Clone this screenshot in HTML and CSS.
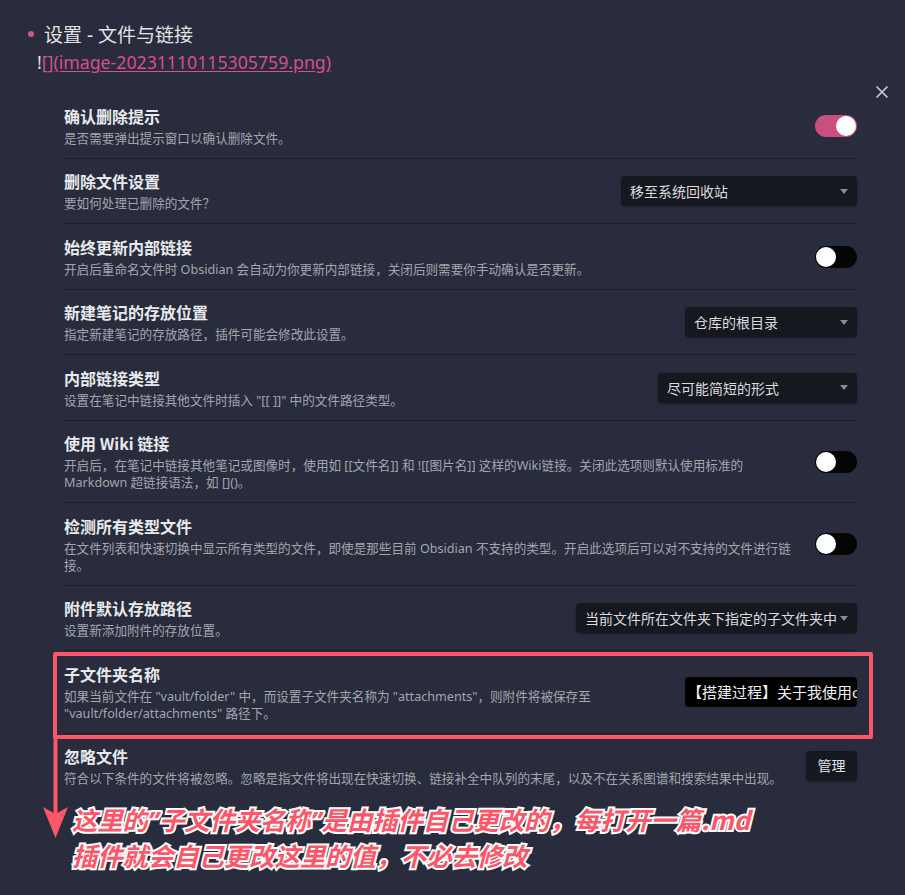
FILE: index.html
```html
<!DOCTYPE html>
<html lang="zh-CN">
<head>
<meta charset="utf-8">
<title>设置 - 文件与链接</title>
<link rel="stylesheet" href="styles.css">
</head>
<body>
<div class="page">
  <div class="note">
    <div class="heading"><span class="bullet"></span><span>设置 - 文件与链接</span></div>
    <div class="embed">!<a href="#">[](image-20231110115305759.png)</a></div>
  </div>

  <div class="modal">
    <svg class="close" viewBox="0 0 12 12" width="12" height="12"><path d="M1 1L11 11M11 1L1 11" stroke="#c9cad0" stroke-width="1.7" stroke-linecap="round"/></svg>

    <div class="settings">
      <div class="item">
        <div class="info">
          <div class="name">确认删除提示</div>
          <div class="desc">是否需要弹出提示窗口以确认删除文件。</div>
        </div>
        <div class="control"><div class="toggle on"><span class="knob"></span></div></div>
      </div>

      <div class="item">
        <div class="info">
          <div class="name">删除文件设置</div>
          <div class="desc">要如何处理已删除的文件？</div>
        </div>
        <div class="control"><div class="select w-236"><span class="select-text">移至系统回收站</span><span class="caret"></span></div></div>
      </div>

      <div class="item">
        <div class="info">
          <div class="name">始终更新内部链接</div>
          <div class="desc">开启后重命名文件时 Obsidian 会自动为你更新内部链接，关闭后则需要你手动确认是否更新。</div>
        </div>
        <div class="control"><div class="toggle"><span class="knob"></span></div></div>
      </div>

      <div class="item">
        <div class="info">
          <div class="name">新建笔记的存放位置</div>
          <div class="desc">指定新建笔记的存放路径，插件可能会修改此设置。</div>
        </div>
        <div class="control"><div class="select w-172"><span class="select-text">仓库的根目录</span><span class="caret"></span></div></div>
      </div>

      <div class="item">
        <div class="info">
          <div class="name">内部链接类型</div>
          <div class="desc">设置在笔记中链接其他文件时插入 "[[ ]]" 中的文件路径类型。</div>
        </div>
        <div class="control"><div class="select w-199"><span class="select-text">尽可能简短的形式</span><span class="caret"></span></div></div>
      </div>

      <div class="item">
        <div class="info">
          <div class="name">使用 Wiki 链接</div>
          <div class="desc nowrap">开启后，在笔记中链接其他笔记或图像时，使用如 [[文件名]] 和 ![[图片名]] 这样的Wiki链接。关闭此选项则默认使用标准的<br>Markdown 超链接语法，如 []()。</div>
        </div>
        <div class="control"><div class="toggle"><span class="knob"></span></div></div>
      </div>

      <div class="item">
        <div class="info">
          <div class="name">检测所有类型文件</div>
          <div class="desc nowrap">在文件列表和快速切换中显示所有类型的文件，即使是那些目前 Obsidian 不支持的类型。开启此选项后可以对不支持的文件进行链<br>接。</div>
        </div>
        <div class="control"><div class="toggle"><span class="knob"></span></div></div>
      </div>

      <div class="item">
        <div class="info">
          <div class="name">附件默认存放路径</div>
          <div class="desc">设置新添加附件的存放位置。</div>
        </div>
        <div class="control"><div class="select w-281"><span class="select-text">当前文件所在文件夹下指定的子文件夹中</span><span class="caret"></span></div></div>
      </div>

      <div class="item">
        <div class="info">
          <div class="name">子文件夹名称</div>
          <div class="desc nowrap">如果当前文件在 "vault/folder" 中，而设置子文件夹名称为 "attachments"，则附件将被保存至<br>"vault/folder/attachments" 路径下。</div>
        </div>
        <div class="control"><div class="text-input">【搭建过程】关于我使用obsidian</div></div>
      </div>

      <div class="item">
        <div class="info">
          <div class="name">忽略文件</div>
          <div class="desc nowrap">符合以下条件的文件将被忽略。忽略是指文件将出现在快速切换、链接补全中队列的末尾，以及不在关系图谱和搜索结果中出现。</div>
        </div>
        <div class="control"><div class="btn">管理</div></div>
      </div>
    </div>

    <div class="annotation">
      <div>这里的<span class="q">”</span>子文件夹名称<span class="q">”</span>是由插件自己更改的，每打开一篇.md</div>
      <div>插件就会自己更改这里的值，不必去修改</div>
    </div>
  </div>

  <div class="highlight-box"></div>
  <svg class="arrow" width="30" height="104" viewBox="0 0 30 104">
    <path d="M11.5 0H15.5V80H11.5Z" fill="#fc5668"/>
    <path d="M1 71L13.5 78L26 71L13.5 102Z" fill="#fc5668"/>
  </svg>
</div>
</body>
</html>
```

FILE: styles.css
```css
html, body {
  margin: 0;
  padding: 0;
}

body {
  background: #282c3c;
  font-family: "Noto Sans", "Noto Sans CJK SC", sans-serif;
  color: #dcdde0;
}

.page {
  position: relative;
  width: 905px;
  height: 895px;
  overflow: hidden;
}

.note {
  padding-top: 20px;
}

.heading {
  display: flex;
  align-items: center;
  gap: 10px;
  height: 28px;
  padding-left: 28px;
  font-size: 19px;
  color: #e2e3e6;
}

.bullet {
  width: 6px;
  height: 6px;
  border-radius: 50%;
  background: #d0578a;
  flex: none;
}

.embed {
  height: 28px;
  line-height: 28px;
  padding-left: 37px;
  font-family: "Noto Sans", sans-serif;
  font-size: 17.7px;
  color: #e6e6e6;
}

.embed a {
  color: #d6508a;
  text-decoration: underline;
  text-underline-offset: 2px;
}

.modal {
  position: relative;
  padding-top: 17px;
}

.close {
  position: absolute;
  left: 876px;
  top: 10px;
}

.settings {
  margin-left: 64px;
  width: 793px;
}

.item {
  display: flex;
  align-items: center;
  gap: 16px;
  padding: 11.5px 0 11px;
  border-top: 1px solid #1c1f2b;
}

.item:first-child {
  border-top: none;
}

.info {
  flex: 1;
  min-width: 0;
}

.name {
  font-family: "Noto Sans CJK SC", sans-serif;
  font-size: 16px;
  font-weight: 700;
  line-height: 22px;
  color: #e9e9ec;
}

.desc {
  margin-top: 3px;
  font-size: 12.6px;
  line-height: 17px;
  color: #a4a6ae;
}

.desc.nowrap {
  white-space: nowrap;
}

.control {
  flex: none;
  display: flex;
}

.toggle {
  display: flex;
  align-items: center;
  box-sizing: border-box;
  width: 42px;
  height: 22px;
  padding: 1px;
  border-radius: 11px;
  background: #050505;
}

.toggle.on {
  justify-content: flex-end;
  background: #c9507e;
}

.knob {
  width: 20px;
  height: 20px;
  border-radius: 50%;
  background: #ffffff;
}

.select {
  display: flex;
  align-items: center;
  justify-content: space-between;
  gap: 2px;
  box-sizing: border-box;
  height: 30px;
  padding: 0 9px 0 9px;
  border-radius: 4px;
  background: #16181f;
  box-shadow: 0 1px 3px rgba(0, 0, 0, 0.35);
  font-size: 14px;
  color: #dcdcdf;
}

.select-text {
  white-space: nowrap;
  overflow: hidden;
}

.caret {
  flex: none;
  width: 0;
  height: 0;
  border-left: 4.5px solid transparent;
  border-right: 4.5px solid transparent;
  border-top: 5px solid #8b8c92;
}

.w-236 { width: 236px; }
.w-172 { width: 172px; }
.w-199 { width: 199px; }
.w-281 { width: 281px; }

.text-input {
  box-sizing: border-box;
  width: 172px;
  height: 30px;
  padding: 0 2px;
  border-radius: 4px;
  background: #000000;
  font-size: 15px;
  line-height: 30px;
  color: #f0f0f0;
  white-space: nowrap;
  overflow: hidden;
}

.btn {
  width: 51px;
  height: 30px;
  border-radius: 4px;
  background: #16181f;
  box-shadow: 0 1px 3px rgba(0, 0, 0, 0.35);
  font-size: 14px;
  line-height: 30px;
  text-align: center;
  color: #e2e2e5;
}

.annotation {
  margin-top: 4px;
  padding-left: 72px;
  font-family: "Noto Sans CJK SC", sans-serif;
  font-size: 25.3px;
  font-weight: 700;
  font-style: italic;
  line-height: 35px;
  color: #fc5668;
  -webkit-text-stroke: 4px #ffffff;
  paint-order: stroke fill;
  white-space: nowrap;
}

.annotation .q {
  font-family: "Noto Sans", sans-serif;
}

.highlight-box {
  position: absolute;
  left: 53px;
  top: 652px;
  width: 820px;
  height: 87px;
  box-sizing: border-box;
  border: 4px solid #fc5668;
  border-radius: 2px;
}

.arrow {
  position: absolute;
  left: 42px;
  top: 736px;
}
```
